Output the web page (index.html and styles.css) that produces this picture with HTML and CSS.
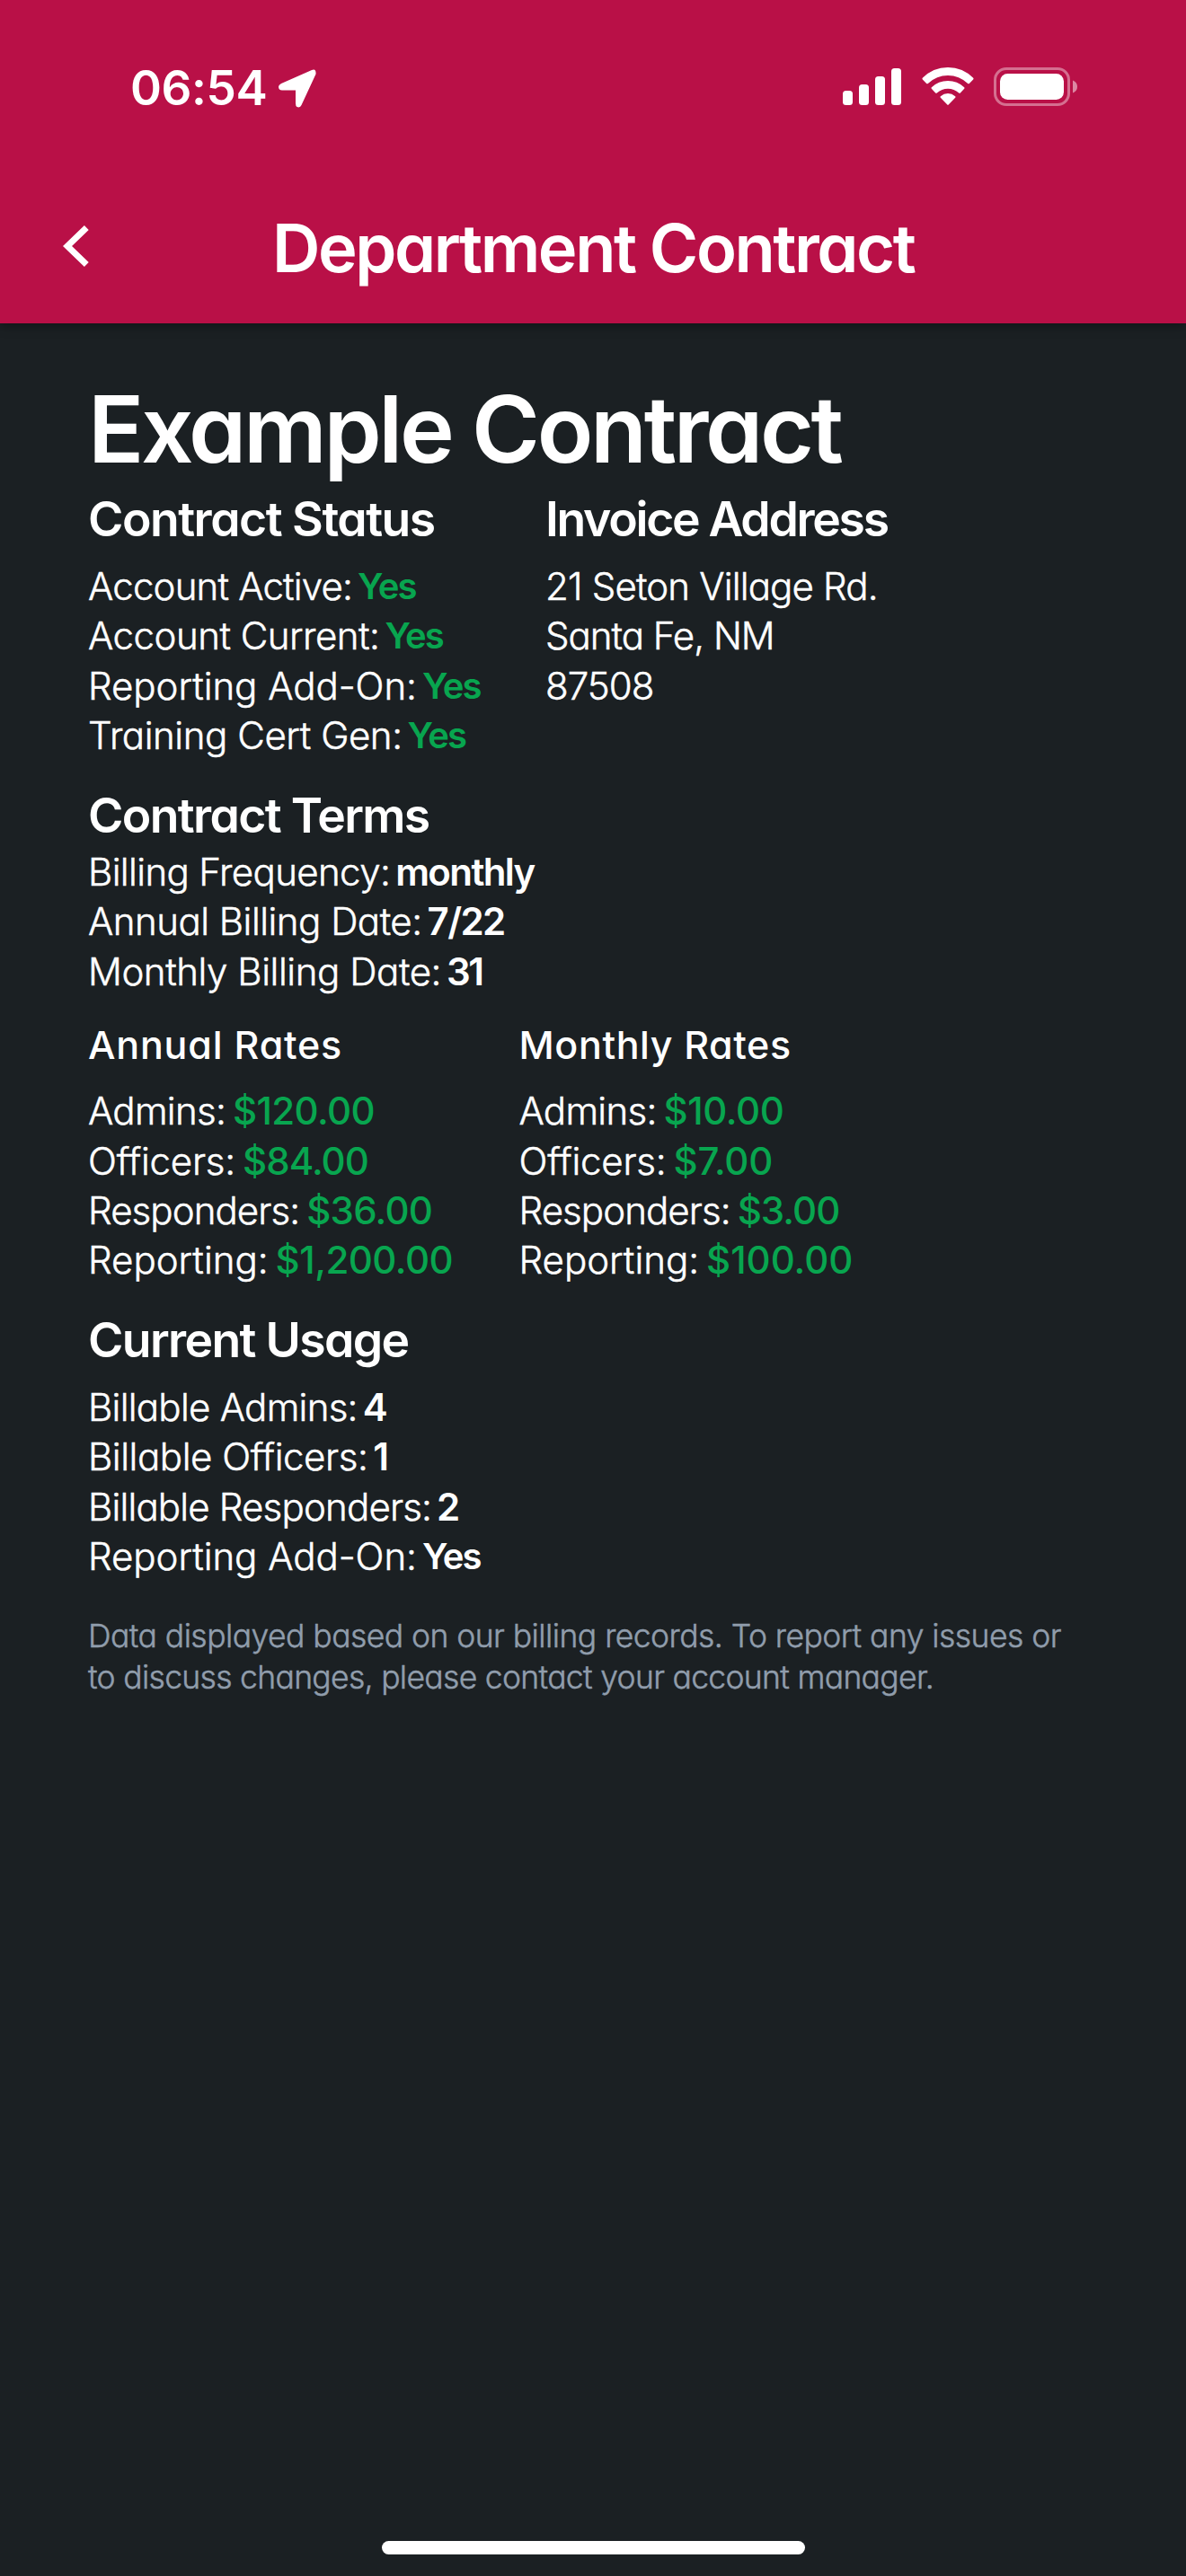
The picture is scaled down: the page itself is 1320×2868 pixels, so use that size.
FILE: index.html
```
<!DOCTYPE html>
<html lang="en">
<head>
<meta charset="utf-8">
<title>Department Contract</title>
<link rel="stylesheet" href="styles.css">
</head>
<body>
<div class="screen">
  <header class="header">
    <div class="status-bar">
      <div class="clock">
        <span class="time">06:54</span>
        <svg class="location" width="42" height="43" viewBox="0 0 42 43"><path d="M37 1Q42-1 41.500 5.500L25.500 40Q24 43.500 20.500 42Q19 41 19 38V23.500H4Q0 23.500 0 19.500Q0 17.500 3 16Z" fill="#fff"/></svg>
      </div>
      <div class="indicators">
        <svg width="66" height="43" viewBox="0 0 66 43" fill="#fff"><rect x="0" y="26" width="11" height="16" rx="3.500"/><rect x="18" y="19" width="11" height="23" rx="3.500"/><rect x="36" y="10" width="11" height="32" rx="3.500"/><rect x="54" y="1" width="11" height="41" rx="3.500"/></svg>
        <svg class="wifi" width="58" height="43" viewBox="0 0 58 43" fill="#fff"><path d="M.8 11.800Q12.500 0 29 0T57.200 11.800Q58 12.600 57.200 13.400L52.800 18Q52 18.700 51.200 18Q41.500 9 29 9T6.800 18Q6 18.700 5.200 18L.8 13.400Q0 12.600.8 11.800Z"/><path d="M10.800 22.200Q18.500 15 29 15T47.200 22.200Q48 23 47.200 23.800L42.800 28.400Q42 29 41.200 28.400Q36 23.700 29 23.700T16.800 28.400Q16 29 15.200 28.400L10.800 23.800Q10 23 10.800 22.200Z"/><path d="M20.800 32.200Q24.500 29 29 29T37.200 32.200Q38 33 37.200 33.800L29.700 41.600Q29 42.200 28.300 41.600L20.800 33.800Q20 33 20.800 32.200Z"/></svg>
        <svg class="battery" width="93" height="43" viewBox="0 0 93 43"><rect x="1.500" y="1.500" width="82" height="40" rx="12.500" fill="none" stroke="#fff" stroke-opacity=".4" stroke-width="3"/><rect x="7" y="7" width="71" height="29" rx="8.500" fill="#fff"/><path d="M88 14.500Q93 16.500 93 21.500T88 28.500Z" fill="#fff" fill-opacity=".5"/></svg>
      </div>
    </div>
    <div class="nav">
      <svg class="back" width="30" height="48" viewBox="0 0 30 48"><path d="M26.300 3.500 5 24 26.300 44.500" fill="none" stroke="#fff" stroke-width="7"/></svg>
      <div class="title">Department Contract</div>
    </div>
  </header>

  <main class="content">
    <h1>Example Contract</h1>

    <div class="columns summary">
      <section>
        <h2 class="status-heading">Contract Status</h2>
        <div class="rows">
          <p><span class="k82">Account Active:</span><b class="yes green">Yes</b></p>
          <p><span class="k52">Account Current:</span><b class="yes green">Yes</b></p>
          <p><span class="k4">Reporting Add-On:</span><b class="yes green">Yes</b></p>
          <p><span class="k41">Training Cert Gen:</span><b class="yes green">Yes</b></p>
        </div>
      </section>
      <section>
        <h2 class="invoice-heading">Invoice Address</h2>
        <div class="rows">
          <p><span class="k82">21 Seton Village Rd.</span></p>
          <p><span class="k97">Santa Fe, NM</span></p>
          <p><span class="k97">87508</span></p>
        </div>
      </section>
    </div>

    <section class="terms">
      <h2>Contract Terms</h2>
      <div class="rows">
        <p><span class="k63">Billing Frequency:</span><b class="k160">monthly</b></p>
        <p><span class="k52">Annual Billing Date:</span><b class="k160">7/22</b></p>
        <p><span class="k41">Monthly Billing Date:</span><b class="k224">31</b></p>
      </div>
    </section>

    <div class="columns rates">
      <section>
        <h3 class="annual">Annual Rates</h3>
        <div class="rows">
          <p><span class="k72">Admins:</span><b class="money k63">$120.00</b></p>
          <p><span class="k21">Officers:</span><b class="money k92">$84.00</b></p>
          <p><span class="k92">Responders:</span><b class="money k72">$36.00</b></p>
          <p><span>Reporting:</span><b class="money k52">$1,200.00</b></p>
        </div>
      </section>
      <section>
        <h3>Monthly Rates</h3>
        <div class="rows">
          <p><span class="k72">Admins:</span><b class="money k41">$10.00</b></p>
          <p><span class="k21">Officers:</span><b class="money k21">$7.00</b></p>
          <p><span class="k92">Responders:</span><b class="money k92">$3.00</b></p>
          <p><span>Reporting:</span><b class="money k4">$100.00</b></p>
        </div>
      </section>
    </div>

    <section class="usage">
      <h2>Current Usage</h2>
      <div class="rows">
        <p><span class="k72">Billable Admins:</span><b>4</b></p>
        <p><span class="k41">Billable Officers:</span><b>1</b></p>
        <p><span class="k82">Billable Responders:</span><b>2</b></p>
        <p><span class="k4">Reporting Add-On:</span><b class="yes">Yes</b></p>
      </div>
    </section>

    <p class="note">Data displayed based on our billing records. To report any issues or <br><span class="k69">to discuss changes, please contact your account manager.</span></p>
  </main>

  <div class="home-indicator"></div>
</div>
</body>
</html>
```
FILE: styles.css
```
* { box-sizing: border-box; }
body { margin: 0; background: #1b2023; }
h1, h2, h3, p { margin: 0; }

.screen {
  display: flex;
  flex-direction: column;
  width: 1320px;
  height: 2868px;
  background: #1b2023;
  color: #fff;
  font-family: Inter, "Liberation Sans", sans-serif;
  font-feature-settings: "cv11" 1;
}

/* Header */
.header {
  height: 360px;
  flex: none;
  background: #b91047;
  box-shadow: 0 2px 12px rgba(0, 0, 0, .4);
}
.status-bar {
  display: flex;
  justify-content: space-between;
  height: 195px;
  padding: 75px 121px 0 145px;
}
.clock { display: flex; height: 46px; align-items: center; }
.time { width: 165px; font-size: 53px; font-weight: 600; line-height: 46px; letter-spacing: -.4px; }
.indicators { display: flex; height: 43px; }
.wifi { margin-left: 22px; }
.battery { margin-left: 22px; }
.nav { display: grid; grid-template-columns: 233px 1fr; align-items: center; height: 165px; padding: 0 0 4px 70px; }
.back { margin-top: -4px; }
.title { font-size: 74px; line-height: 96px; font-weight: 600; letter-spacing: -2.45px; white-space: nowrap; }

/* Contract details */
.content { flex: 1; padding: 53px 98px 0; white-space: nowrap; }
h1 { font-size: 103px; line-height: 130px; font-weight: 600; letter-spacing: -3.35px; }
h2 { font-size: 53.5px; line-height: 70px; font-weight: 600; letter-spacing: -1.65px; }
h3 { font-size: 43px; line-height: 58px; font-weight: 500; letter-spacing: .6px; }
.annual { letter-spacing: .8px; }
.status-heading { letter-spacing: -1.5px; }
.invoice-heading { letter-spacing: -2.3px; }
.columns { display: grid; }
.summary { grid-template-columns: 509px 1fr; }
.rates { grid-template-columns: 479.5px 1fr; margin-top: 25px; }
.rows { padding-top: 12px; font-size: 42px; line-height: 55.44px; font-weight: 300; }
.rows p { display: flex; gap: 6px; }
.rows span, .note { -webkit-text-stroke: .5px currentColor; }
.rows b { font-weight: 600; }
.terms { margin-top: 26px; }
.terms .rows { padding-top: 0; }
.rates .rows { padding-top: 17px; }
.rates .rows p { gap: 8px; }
.usage { margin-top: 26px; }
.rows .money { font-weight: 500; color: #08a54f; }
.rows .green { color: #08a54f; }
.yes { font-size: 40px; letter-spacing: -1.9px; }
.note {
  margin-top: 38px;
  font-size: 35.5px;
  line-height: 46.4px;
  font-weight: 300;
  letter-spacing: -.55px;
  color: #909dac;
}

/* Tracking steps, in hundredths of a pixel */
.k4 { letter-spacing: -.04px; }
.k21 { letter-spacing: -.21px; }
.k41 { letter-spacing: -.43px; }
.k52 { letter-spacing: -.5px; }
.k63 { letter-spacing: -.62px; }
.k69 { letter-spacing: -.69px; }
.k72 { letter-spacing: -.72px; }
.k82 { letter-spacing: -.82px; }
.k92 { letter-spacing: -.92px; }
.k97 { letter-spacing: -1px; }
.k160 { letter-spacing: -1.6px; }
.k224 { letter-spacing: -2.5px; }

.home-indicator {
  flex: none;
  width: 471px;
  height: 15px;
  margin: 0 auto 24px;
  border-radius: 8px;
  background: #fff;
}
```
